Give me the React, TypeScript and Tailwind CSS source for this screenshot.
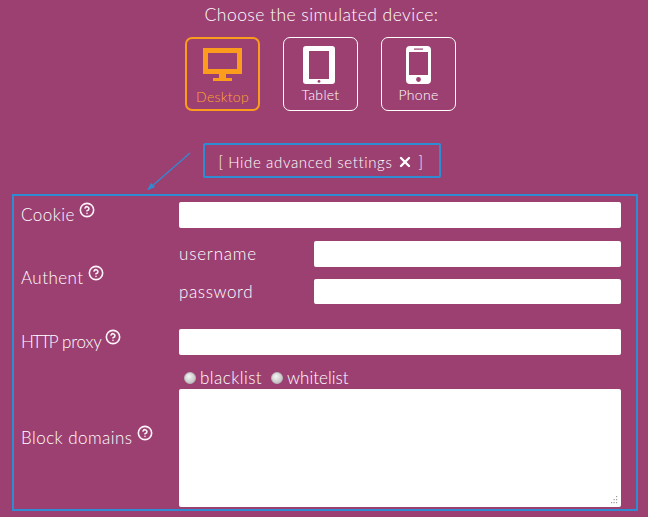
import { CircleHelp, X } from "lucide-react";

function Help() {
  return <CircleHelp size={16} strokeWidth={2.4} className="text-[#fdf3f9] -translate-y-[5px] ml-[4px] shrink-0" />;
}

function DesktopIcon() {
  return (
    <svg width="39" height="34" viewBox="0 0 39 34" fill="#fb9c1c">
      <path fillRule="evenodd" d="M0 0h39v26H0zM5 5v16h29V5z" />
      <path d="M16 26h7v4h-7zM10 30h19v3H10z" />
    </svg>
  );
}

function TabletIcon() {
  return (
    <svg className="mr-[3px]" width="32" height="38" viewBox="0 0 32 38" fill="#ffffff">
      <path fillRule="evenodd" d="M3 0h26a3 3 0 0 1 3 3v32a3 3 0 0 1-3 3H3a3 3 0 0 1-3-3V3a3 3 0 0 1 3-3zM6 5v28h20V5z" />
      <circle cx="16" cy="35.4" r="1.4" fill="#9c4072" />
    </svg>
  );
}

function PhoneIcon() {
  return (
    <svg width="25" height="38" viewBox="0 0 25 38" fill="#ffffff">
      <path fillRule="evenodd" d="M4 0h17a4 4 0 0 1 4 4v30a4 4 0 0 1-4 4H4a4 4 0 0 1-4-4V4a4 4 0 0 1 4-4zM3 6v23h19V6z" />
      <rect x="8" y="2.5" width="9" height="1.2" fill="#9c4072" />
      <circle cx="12.5" cy="33.5" r="2.4" fill="#9c4072" />
    </svg>
  );
}

const devices = [
  { name: "Desktop", icon: <DesktopIcon />, active: true },
  { name: "Tablet", icon: <TabletIcon />, active: false },
  { name: "Phone", icon: <PhoneIcon />, active: false },
];

const inputClass = "block h-[26px] bg-white rounded-[2px] border-0 outline-none";

function Radio({ label, className }: { label: string; className?: string }) {
  return (
    <label className={`flex items-center gap-[4px] ${className ?? ""}`}>
      <span className="w-[12px] h-[12px] rounded-full border border-[#b9b9b9] bg-[radial-gradient(circle_at_40%_35%,#f4f4f4,#b4b4b4)]" />
      {label}
    </label>
  );
}

export default function App() {
  return (
    <div className="relative w-[648px] h-[517px] overflow-hidden bg-[#9c4072] text-white font-light font-['Lato','Open_Sans',sans-serif]">
      <h1 className="pt-[4px] text-center text-[17.5px] leading-[21px] tracking-[0.45px] pr-[5px]">Choose the simulated device:</h1>

      <div className="mt-[12px] flex justify-center gap-[23px] pr-[7px]">
        {devices.map((d) => (
          <button
            key={d.name}
            className={`w-[75px] h-[74px] rounded-[7px] flex flex-col items-center ${d.active ? "border-2 border-[#fb9c1c] text-[#ffa526] pt-[9px]" : "border border-white pt-[8px]"}`}
          >
            <span className="h-[38px] flex items-start">{d.icon}</span>
            <span className="mt-[2px] text-[14px] leading-[18px] tracking-[0.3px]">{d.name}</span>
          </button>
        ))}
      </div>

      <div className="mt-[32px] ml-[203px] w-[238px] h-[35px] border-2 border-[#2f8bd2] rounded-[2px] flex items-center justify-center pt-[3px] pr-[2px] text-[15px] tracking-[0.63px]">
        <span>[ Hide advanced settings</span>
        <X size={16} strokeWidth={3.5} className="ml-[5px] mr-[5px]" />
        <span>]</span>
      </div>

      <svg className="absolute left-[146px] top-[152px]" width="46" height="40" viewBox="0 0 46 40" fill="none">
        <path d="M44 1L5 35" stroke="#2f8bd2" strokeWidth="1.2" />
        <path d="M1 38.5L9 35L5 31z" fill="#2f8bd2" />
      </svg>

      <form className="mt-[16px] ml-[12px] w-[626px] h-[317px] border-2 border-[#2f8bd2] pt-[6px] pl-[7px] text-[17px] tracking-[0.45px]">
        <div className="flex items-center h-[26px]">
          <div className="w-[158px] flex items-center">Cookie<Help /></div>
          <input className={`${inputClass} w-[442px]`} />
        </div>

        <div className="mt-[13px] flex">
          <div className="w-[158px] flex items-center pt-[11px]">Authent<Help /></div>
          <div className="flex flex-col gap-[12px]">
            <div className="flex items-center h-[26px]">
              <span className="w-[135px] tracking-[0.8px]">username</span>
              <input className={`${inputClass} w-[307px]`} />
            </div>
            <div className="flex items-center h-[25px]">
              <span className="w-[135px] tracking-[0.6px]">password</span>
              <input className={`${inputClass} w-[307px] !h-[25px]`} />
            </div>
          </div>
        </div>

        <div className="mt-[25px] flex items-center h-[26px]">
          <div className="w-[158px] flex items-center">
            <span className="tracking-[-1.6px]">HTTP</span>
            <span className="ml-[5px] tracking-[-0.2px]">proxy</span>
            <Help />
          </div>
          <input className={`${inputClass} w-[442px]`} />
        </div>

        <div className="mt-[12px] flex items-center h-[140px]">
          <div className="w-[158px] flex items-center pt-[1px]">Block domains<Help /></div>
          <div>
            <div className="flex gap-[9px] h-[22px] items-center pl-[5px]">
              <Radio label="blacklist" />
              <Radio label="whitelist" className="tracking-[0px]" />
            </div>
            <div className="relative">
              <textarea className={`${inputClass} w-[442px] !h-[118px] resize-none`} />
              <svg className="absolute right-[3px] bottom-[3px]" width="8" height="8" viewBox="0 0 8 8" fill="#9a9a9a">
                <rect x="6" y="0" width="1.2" height="1.2" />
                <rect x="3.5" y="3" width="1.2" height="1.2" />
                <rect x="6" y="3" width="1.2" height="1.2" />
                <rect x="1" y="6" width="1.2" height="1.2" />
                <rect x="3.5" y="6" width="1.2" height="1.2" />
                <rect x="6" y="6" width="1.2" height="1.2" />
              </svg>
            </div>
          </div>
        </div>
      </form>
    </div>
  );
}
